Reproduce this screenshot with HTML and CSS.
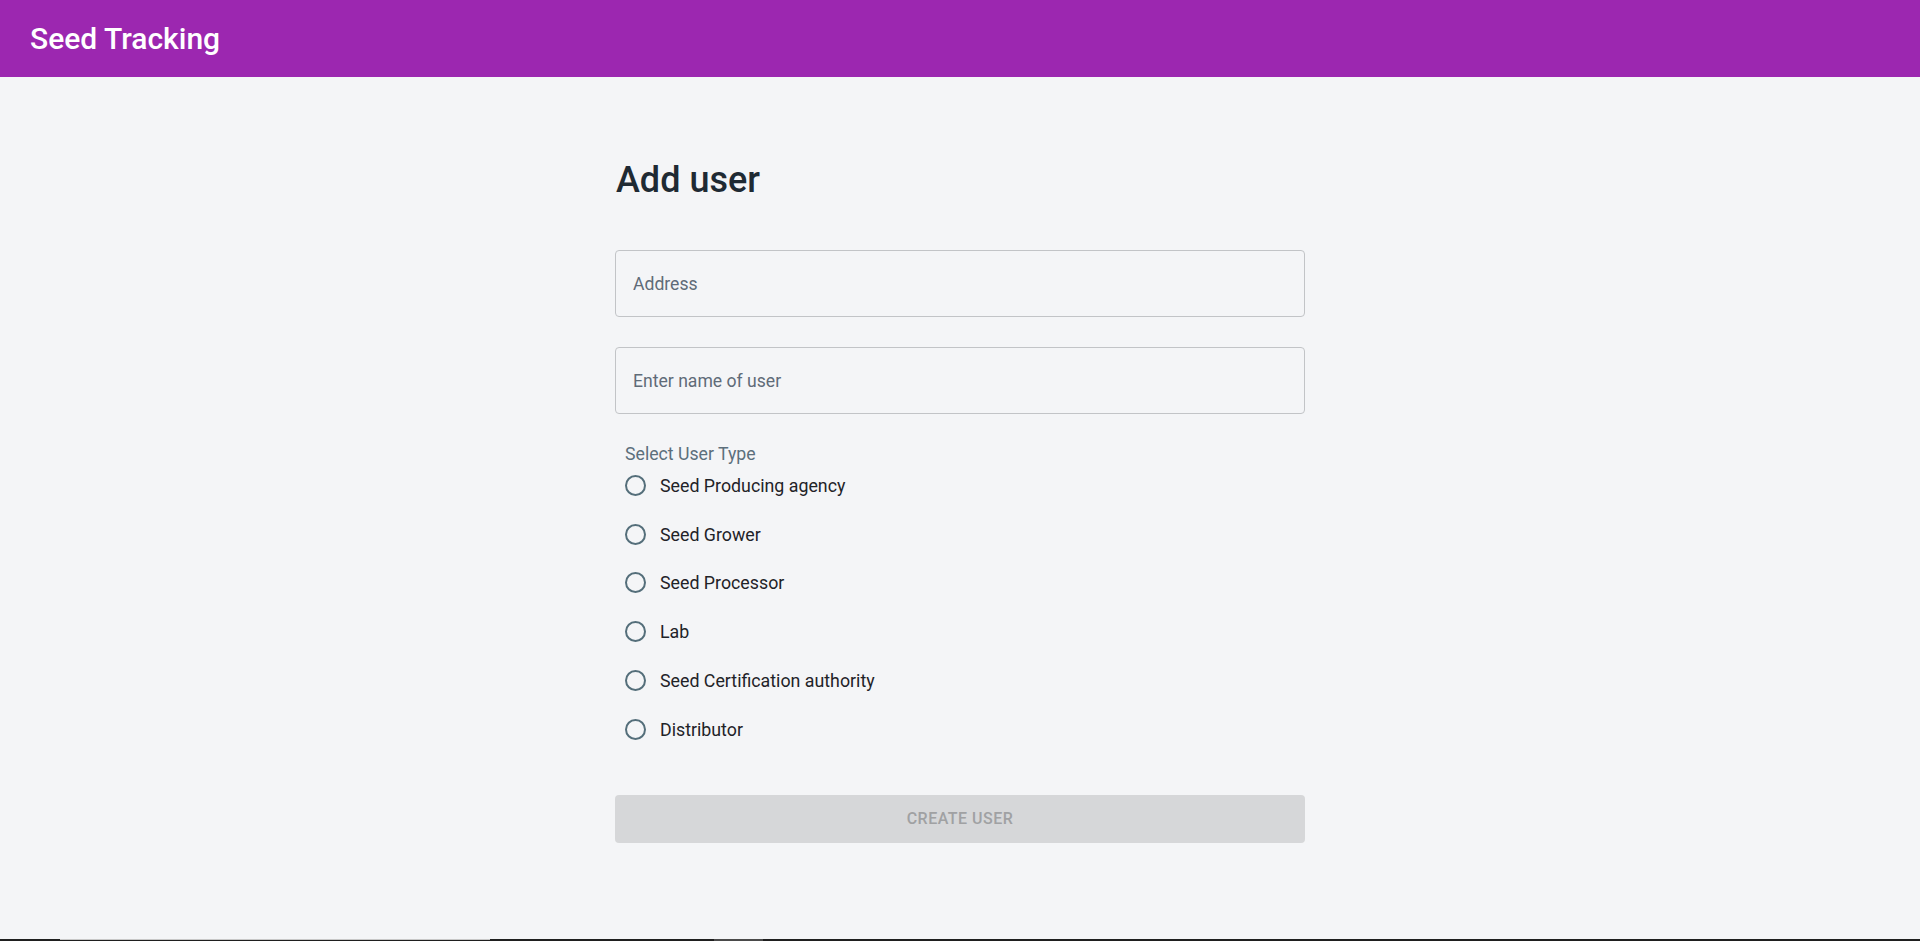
FILE: index.html
```html
<!DOCTYPE html>
<html lang="en">
<head>
<meta charset="utf-8">
<title>Seed Tracking</title>
<link rel="stylesheet" href="styles.css">
</head>
<body>
<div class="page">
  <header class="appbar">
    <div class="brand">Seed Tracking</div>
  </header>
  <main class="main">
    <form class="form">
      <h1 class="heading">Add user</h1>
      <div class="field"><input class="input" type="text" placeholder="Address"></div>
      <div class="field second"><input class="input" type="text" placeholder="Enter name of user"></div>
      <div class="group">
        <div class="group-label">Select User Type</div>
        <label class="radio-row"><span class="radio"></span><span class="radio-text">Seed Producing agency</span></label>
        <label class="radio-row"><span class="radio"></span><span class="radio-text">Seed Grower</span></label>
        <label class="radio-row"><span class="radio"></span><span class="radio-text">Seed Processor</span></label>
        <label class="radio-row"><span class="radio"></span><span class="radio-text">Lab</span></label>
        <label class="radio-row"><span class="radio"></span><span class="radio-text">Seed Certification authority</span></label>
        <label class="radio-row"><span class="radio"></span><span class="radio-text">Distributor</span></label>
      </div>
      <button class="submit" type="button" disabled>Create user</button>
    </form>
  </main>
  <div class="taskbar">
    <span class="tb-a"></span>
    <span class="tb-b"></span>
  </div>
</div>
</body>
</html>
```
FILE: styles.css
```css
* { box-sizing: border-box; }
html, body { margin: 0; padding: 0; }
body {
  background: #f4f5f7;
  font-family: Roboto, "Liberation Sans", sans-serif;
  color: #1f2328;
}
.page {
  height: 941px;
  display: flex;
  flex-direction: column;
  overflow: hidden;
}
.appbar {
  height: 77px;
  flex: 0 0 77px;
  background: #9c27b0;
  display: flex;
  align-items: center;
  padding-left: 30px;
}
.brand {
  color: #ffffff;
  font-size: 30px;
  font-weight: 500;
  line-height: 1;
}
.main {
  flex: 1 1 auto;
  display: flex;
  justify-content: center;
}
.form {
  width: 690px;
  padding-top: 82px;
  display: flex;
  flex-direction: column;
}
.heading {
  margin: 0;
  font-size: 36px;
  line-height: 42px;
  font-weight: 500;
  color: #1f2a33;
  padding-left: 1px;
}
.field { margin-top: 49px; }
.field.second { margin-top: 30px; }
.input {
  display: block;
  width: 100%;
  height: 67px;
  border: 1px solid #c2c4c7;
  border-radius: 4px;
  background: transparent;
  padding: 0 17px;
  font-family: Roboto, "Liberation Sans", sans-serif;
  font-size: 17.6px;
  color: #1f2328;
  outline: none;
}
.input::placeholder { color: #5f6b78; opacity: 1; }
.group {
  margin-top: 34px;
  padding-left: 10px;
  display: flex;
  flex-direction: column;
}
.group-label {
  font-size: 17.7px;
  line-height: 13px;
  color: #5c6f7c;
}
.radio-row {
  height: 48.8px;
  display: flex;
  align-items: center;
}
.radio {
  width: 21px;
  height: 21px;
  border: 2.2px solid #546e7a;
  border-radius: 50%;
  margin-right: 14px;
  flex: 0 0 auto;
}
.radio-text {
  font-size: 17.8px;
  color: #1f2328;
}
.submit {
  margin-top: 41px;
  height: 48px;
  width: 100%;
  border: none;
  border-radius: 4px;
  background: #d6d7d9;
  color: #a0a1a3;
  font-family: Roboto, "Liberation Sans", sans-serif;
  font-size: 16px;
  font-weight: 500;
  letter-spacing: 0.5px;
  text-transform: uppercase;
}
.taskbar {
  flex: 0 0 2px;
  height: 2px;
  background: #1f1f1f;
  position: relative;
}
.tb-a {
  position: absolute;
  left: 60px;
  top: 0;
  width: 430px;
  height: 1px;
  background: #c8c8c8;
}
.tb-b {
  position: absolute;
  left: 714px;
  top: 0;
  width: 49px;
  height: 2px;
  background: #4a4a4a;
}
```
